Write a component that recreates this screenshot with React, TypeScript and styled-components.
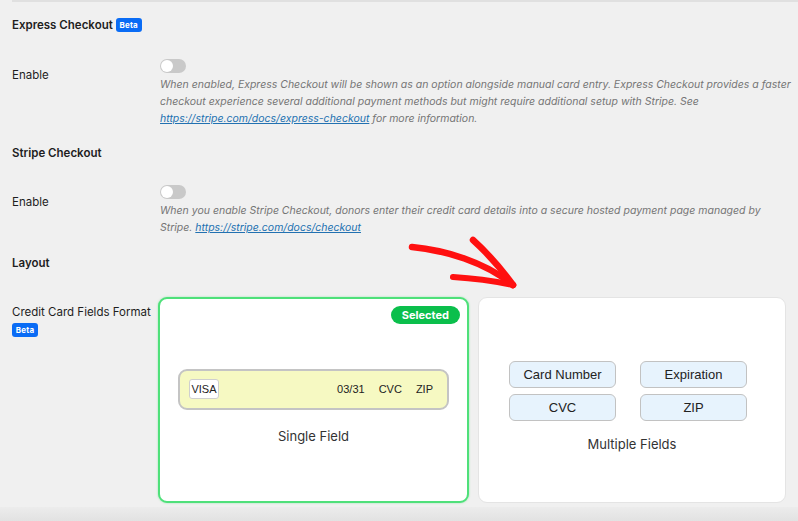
import React from 'react';
import styled, { createGlobalStyle } from 'styled-components';

const GlobalStyle = createGlobalStyle`
  html, body {
    margin: 0;
    padding: 0;
    background: #f0f0f0;
    height: 521px;
    overflow: hidden;
  }
  body {
    font-family: Inter, "Noto Sans", sans-serif;
    color: #1e1e1e;
  }
`;

const Page = styled.div`
  position: relative;
  padding: 0 12px;
  height: 521px;
  box-sizing: border-box;
  display: flex;
  flex-direction: column;
`;

const TopRule = styled.div`
  height: 2px;
  background: #e0e0e0;
  margin-right: -12px;
`;

const Heading = styled.h3<{ $gap: number }>`
  margin: ${p => p.$gap}px 0 0;
  font-size: 11.5px;
  line-height: 16px;
  font-weight: 600;
  display: flex;
  align-items: center;
  gap: 3px;
`;

const Badge = styled.span`
  display: inline-flex;
  align-items: center;
  justify-content: center;
  width: 26px;
  height: 14px;
  border-radius: 3px;
  background: #0a6cf5;
  color: #fff;
  font-size: 8px;
  font-weight: 700;
  letter-spacing: 0.2px;
`;

const Row = styled.div<{ $gap: number; $label: number }>`
  display: grid;
  grid-template-columns: ${p => p.$label}px 1fr;
  margin-top: ${p => p.$gap}px;
`;

const Label = styled.div<{ $top: number }>`
  padding-top: ${p => p.$top}px;
  font-size: 11.5px;
  line-height: 16px;
  display: flex;
  flex-direction: column;
  align-items: flex-start;
  gap: 3px;
`;

const Toggle = styled.div`
  position: relative;
  width: 26px;
  height: 14px;
  border-radius: 7px;
  background: #c9c9c9;
  &::after {
    content: '';
    position: absolute;
    left: 1px;
    top: 1px;
    width: 12px;
    height: 12px;
    border-radius: 50%;
    background: #fff;
  }
`;

const Description = styled.p`
  margin: 3px 0 0;
  font-size: 10.5px;
  line-height: 17px;
  font-style: italic;
  color: #757575;
  white-space: nowrap;
  a {
    color: #2271b1;
    text-decoration: underline;
  }
`;

const CardGrid = styled.div`
  display: grid;
  grid-template-columns: 311px 308px;
  gap: 9px;
`;

const Card = styled.div<{ $selected?: boolean }>`
  position: relative;
  height: 206px;
  box-sizing: border-box;
  background: #fff;
  border-radius: 9px;
  border: ${p => (p.$selected ? '2px solid #4fe07a' : '1px solid #e4e4e4')};
  box-shadow: ${p => (p.$selected ? '0 0 2px rgba(80, 224, 122, 0.6)' : 'none')};
  display: flex;
  flex-direction: column;
  align-items: center;
  justify-content: center;
  padding: 12px 18px 0;
`;

const SelectedPill = styled.span`
  position: absolute;
  top: 7px;
  right: 7px;
  height: 18px;
  padding: 0 11px;
  border-radius: 9px;
  background: #0bbf4c;
  color: #fff;
  font-size: 11px;
  font-weight: 700;
  display: flex;
  align-items: center;
`;

const SingleInput = styled.div`
  align-self: stretch;
  height: 41px;
  box-sizing: border-box;
  border: 2px solid #c4c4c4;
  border-radius: 9px;
  background: #f6f9c2;
  display: flex;
  align-items: center;
  padding: 0 14px 0 9px;
  gap: 14px;
  font-family: "Liberation Sans", Arial, sans-serif;
  font-size: 11px;
  color: #222;
`;

const CardBrand = styled.span`
  width: 30px;
  height: 20px;
  box-sizing: border-box;
  border: 1px solid #cfcfcf;
  border-radius: 3px;
  background: #fff;
  font-size: 11px;
  display: flex;
  align-items: center;
  justify-content: center;
  margin-right: auto;
`;

const Caption = styled.div<{ $gap: number }>`
  margin-top: ${p => p.$gap}px;
  font-size: 13px;
  line-height: 16px;
  color: #333;
`;

const FieldGrid = styled.div`
  display: grid;
  grid-template-columns: 107px 107px;
  column-gap: 24px;
  row-gap: 6px;
  margin-left: -8px;
`;

const FieldBox = styled.div`
  height: 27px;
  box-sizing: border-box;
  border: 1.5px solid #c2c2c2;
  border-radius: 6px;
  background: #e7f3fd;
  display: flex;
  align-items: center;
  justify-content: center;
  font-family: "Liberation Sans", Arial, sans-serif;
  font-size: 13px;
  color: #222;
`;

const Footer = styled.div`
  margin: auto -12px 0;
  height: 14px;
  background: linear-gradient(to bottom, #ececec, #e2e2e2);
`;

const Arrow = styled.svg`
  position: absolute;
  left: 400px;
  top: 230px;
  width: 130px;
  height: 70px;
  overflow: visible;
`;

function App() {
  return (
    <Page>
      <GlobalStyle />
      <TopRule />
      <Heading $gap={15}>
        Express Checkout <Badge>Beta</Badge>
      </Heading>
      <Row $gap={26} $label={148}>
        <Label $top={8}>Enable</Label>
        <div>
          <Toggle />
          <Description>
            When enabled, Express Checkout will be shown as an option alongside manual card entry. Express Checkout provides a faster
            <br />
            checkout experience several additional payment methods but might require additional setup with Stripe. See
            <br />
            <a href="#">https://stripe.com/docs/express-checkout</a> for more information.
          </Description>
        </div>
      </Row>

      <Heading $gap={18}>Stripe Checkout</Heading>
      <Row $gap={24} $label={148}>
        <Label $top={9}>Enable</Label>
        <div>
          <Toggle />
          <Description>
            When you enable Stripe Checkout, donors enter their credit card details into a secure hosted payment page managed by
            <br />
            Stripe. <a href="#">https://stripe.com/docs/checkout</a>
          </Description>
        </div>
      </Row>

      <Heading $gap={19}>Layout</Heading>
      <Row $gap={26} $label={146}>
        <Label $top={7}>
          Credit Card Fields Format
          <Badge>Beta</Badge>
        </Label>
        <CardGrid>
          <Card $selected>
            <SelectedPill>Selected</SelectedPill>
            <SingleInput>
              <CardBrand>VISA</CardBrand>
              <span>03/31</span>
              <span>CVC</span>
              <span>ZIP</span>
            </SingleInput>
            <Caption $gap={18}>Single Field</Caption>
          </Card>
          <Card>
            <FieldGrid>
              <FieldBox>Card Number</FieldBox>
              <FieldBox>Expiration</FieldBox>
              <FieldBox>CVC</FieldBox>
              <FieldBox>ZIP</FieldBox>
            </FieldGrid>
            <Caption $gap={15}>Multiple Fields</Caption>
          </Card>
        </CardGrid>
      </Row>
      <Footer />

      <Arrow viewBox="0 0 130 70">
        <g fill="none" stroke="#ff1010" strokeLinecap="round" strokeLinejoin="round">
          <path d="M12 17 C 45 20, 85 32, 113 55" strokeWidth="6.5" />
          <path d="M73 10 Q 95 30 113 55" strokeWidth="6.5" />
          <path d="M53 47 Q 85 49 113 55" strokeWidth="6" />
        </g>
      </Arrow>
    </Page>
  );
}

export default App;
